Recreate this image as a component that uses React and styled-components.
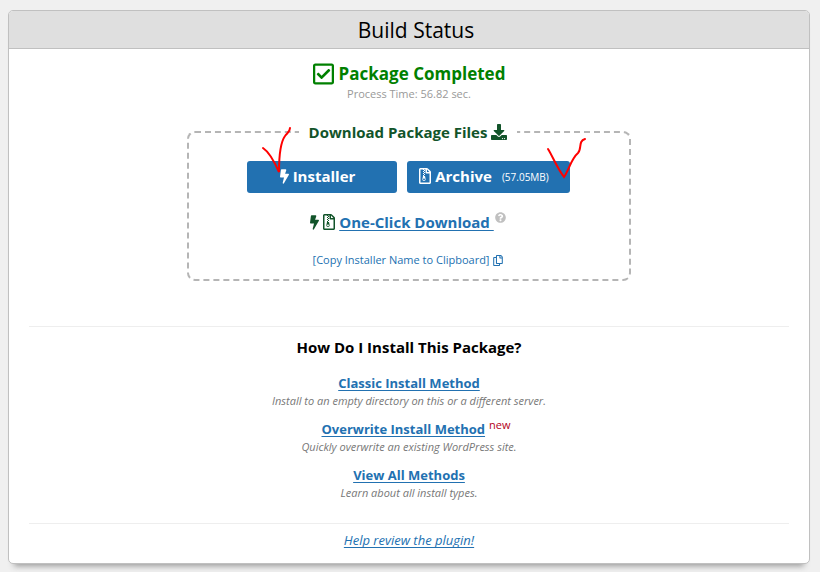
import React from 'react';
import styled, { createGlobalStyle } from 'styled-components';
import {
    FaBolt,
    FaDownload,
    FaQuestionCircle,
    FaRegCheckSquare,
    FaRegCopy,
    FaRegFileArchive
} from 'react-icons/fa';

const GlobalStyle=createGlobalStyle`
    *{
        box-sizing:border-box;
    }

    body{
        margin:0;
        padding:10px 10px 8px 8px;
        background:#f0f0f0;
        color:#000;
        font-family:'Open Sans', 'Noto Sans', sans-serif;
    }
`;

const Panel=styled.main`
    border:1px solid #c0c0c0;
    border-radius:5px;
    background:#fff;
    box-shadow:0 8px 6px -6px #999;
    text-align:center;
`;

const PanelTitle=styled.h1`
    margin:0;
    padding:1px 0 0 14px;
    border-bottom:1px solid #c0c0c0;
    border-radius:4px 4px 0 0;
    background:#dfdfdf;
    font-size:21px;
    font-weight:400;
    line-height:36px;
`;

const PanelBody=styled.div`
    display:flex;
    flex-direction:column;
    align-items:center;
    padding:13px 20px 11px;
`;

const Result=styled.h2`
    display:flex;
    align-items:center;
    gap:5px;
    margin:0;
    color:#008000;
    font-size:17px;
    font-weight:700;
    line-height:24px;
`;

const CheckIcon=styled(FaRegCheckSquare)`
    width:21px;
    height:24px;
`;

const BoltIcon=styled(FaBolt)`
    width:9px;
    height:15px;
`;

const ArchiveIcon=styled(FaRegFileArchive)`
    width:12px;
    height:16px;
`;

const CopyIcon=styled(FaRegCopy)`
    width:10px;
    height:11px;
`;

const ProcessTime=styled.div`
    color:#999;
    font-size:11px;
    line-height:16px;
`;

const Downloads=styled.fieldset`
    display:flex;
    flex-direction:column;
    align-items:center;
    width:444px;
    max-width:100%;
    margin:19px 0 0;
    padding:18px 12px 11px 10px;
    border:2px dashed #b5b5b5;
    border-radius:8px;
`;

const DownloadsLegend=styled.legend`
    margin:0 auto;
    padding:0 10px;
    color:#12542a;
    font-size:15px;
    font-weight:700;
    line-height:22px;
    white-space:nowrap;

    svg{
        margin-left:4px;
        vertical-align:-2px;
    }
`;

const ButtonRow=styled.div`
    display:flex;
    justify-content:center;
    gap:10px;
`;

const DownloadButton=styled.button`
    position:relative;
    display:flex;
    align-items:center;
    justify-content:center;
    gap:4px;
    width:${({$wide}) => ($wide ? '163px' : '150px')};
    height:32px;
    padding:0 18px 2px 10px;
    border:0;
    border-radius:3px;
    background:#2271b1;
    color:#fff;
    font-family:inherit;
    font-size:15px;
    font-weight:700;
    white-space:nowrap;
    cursor:pointer;
`;

const FileSize=styled.span`
    margin:2px 0 0 6px;
    font-size:10px;
    font-weight:400;
`;

const PenMark=styled.svg`
    position:absolute;
    top:-34px;
    left:${({$left}) => $left};
    overflow:visible;
    pointer-events:none;
`;

const OneClick=styled.div`
    display:flex;
    align-items:center;
    gap:4px;
    margin-top:17px;
    color:#12542a;
    font-size:15px;
    line-height:24px;
`;

const TextLink=styled.a`
    color:#2271b1;
    font-weight:${({$bold}) => ($bold ? '700' : '400')};
    text-decoration:underline;
    text-decoration-thickness:1px;
    text-underline-offset:2px;
    text-decoration-skip-ink:none;
    white-space:pre;
`;

const HelpIcon=styled(FaQuestionCircle)`
    align-self:flex-start;
    margin:2px 0 0 -3px;
    color:#c0c0c0;
`;

const CopyButton=styled.button`
    display:flex;
    align-items:center;
    gap:4px;
    margin-top:18px;
    padding:0;
    border:0;
    background:transparent;
    color:#2271b1;
    font-family:inherit;
    font-size:11px;
    line-height:16px;
    cursor:pointer;
`;

const Divider=styled.hr`
    width:100%;
    margin:${({$top}) => $top} 0 0;
    border:0;
    border-top:1px solid #eee;
`;

const Question=styled.h3`
    margin:9px 0 16px;
    font-size:15px;
    font-weight:700;
    line-height:22px;
`;

const Method=styled.div`
    margin-bottom:10px;
`;

const MethodTitle=styled.div`
    padding-left:${({$isNew}) => ($isNew ? '14px' : '0')};
    font-size:13px;
    line-height:18px;
`;

const NewTag=styled.sup`
    margin-left:4px;
    color:#b30021;
    font-size:11px;
    line-height:0;
`;

const MethodNote=styled.div`
    color:#777;
    font-size:11px;
    font-style:italic;
    line-height:18px;
`;

const Review=styled.div`
    margin-top:6px;
    padding-bottom:2px;
    font-size:13px;
    font-style:italic;
    line-height:20px;
`;

const methods=[
    { title:'Classic Install Method', note:'Install to an empty directory on this or a different server.' },
    { title:'Overwrite Install Method', note:'Quickly overwrite an existing WordPress site.', isNew:true },
    { title:'View All Methods', note:'Learn about all install types.' }
];

const App = () => {
    return (
        <>
            <GlobalStyle />
            <Panel>
                <PanelTitle>Build Status</PanelTitle>
                <PanelBody>
                    <Result>
                        <CheckIcon />
                        Package Completed
                    </Result>
                    <ProcessTime>Process Time: 56.82 sec.</ProcessTime>

                    <Downloads>
                        <DownloadsLegend>
                            Download Package Files
                            <FaDownload size={16} />
                        </DownloadsLegend>
                        <ButtonRow>
                            <DownloadButton type="button">
                                <BoltIcon />
                                Installer
                                <PenMark $left="14px" width="32" height="48" fill="none" stroke="#f00" strokeWidth="2" strokeLinecap="round">
                                    <path d="M2 21C8 25 14 36 18 45C18 33 19 16 24 9C26 6 29 5 29 1" />
                                </PenMark>
                            </DownloadButton>
                            <DownloadButton type="button" $wide>
                                <ArchiveIcon />
                                Archive
                                <FileSize>(57.05MB)</FileSize>
                                <PenMark $left="140px" width="42" height="52" fill="none" stroke="#f00" strokeWidth="2" strokeLinecap="round">
                                    <path d="M1 22C6 30 10 41 17 50C22 43 24 32 31 26C35 22 31 14 38 12" />
                                </PenMark>
                            </DownloadButton>
                        </ButtonRow>
                        <OneClick>
                            <BoltIcon />
                            <ArchiveIcon />
                            <TextLink href="#download" $bold>{'One-Click Download '}</TextLink>
                            <HelpIcon size={11} />
                        </OneClick>
                        <CopyButton type="button">
                            [Copy Installer Name to Clipboard]
                            <CopyIcon />
                        </CopyButton>
                    </Downloads>

                    <Divider $top="45px" />
                    <Question>How Do I Install This Package?</Question>
                    {methods.map((item)=>(
                        <Method key={item.title}>
                            <MethodTitle $isNew={item.isNew}>
                                <TextLink href="#install" $bold>{item.title}</TextLink>
                                {item.isNew && <NewTag>new</NewTag>}
                            </MethodTitle>
                            <MethodNote>{item.note}</MethodNote>
                        </Method>
                    ))}
                    <Divider $top="11px" />
                    <Review>
                        <TextLink href="#review">Help review the plugin!</TextLink>
                    </Review>
                </PanelBody>
            </Panel>
        </>
    )
}

export default App;
